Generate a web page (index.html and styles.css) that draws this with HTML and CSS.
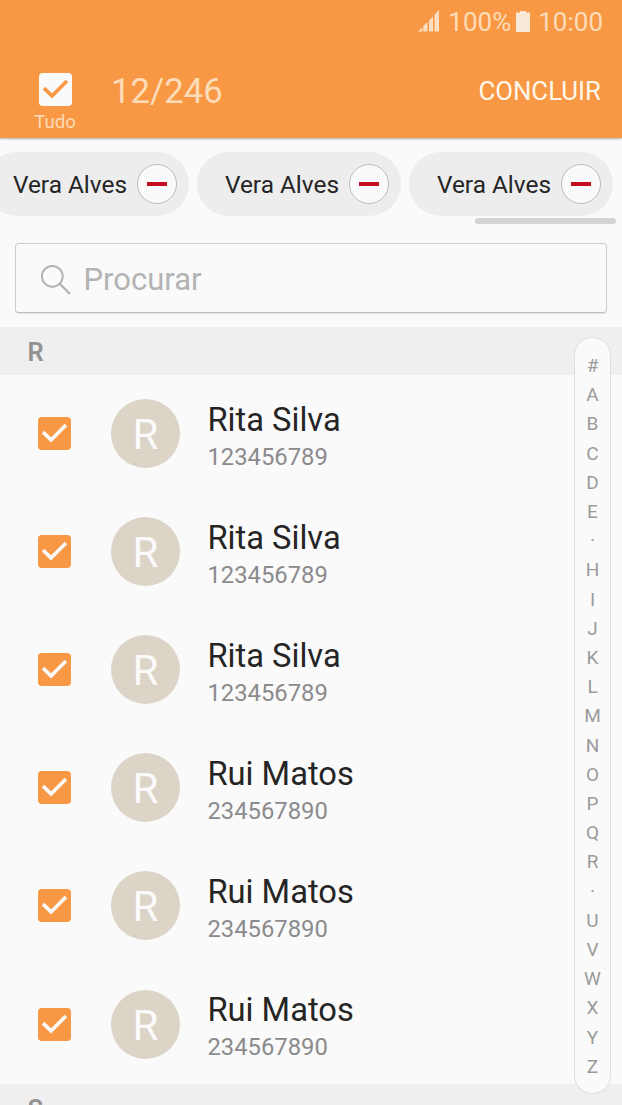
FILE: index.html
```html
<!DOCTYPE html>
<html lang="pt">
<head>
<meta charset="utf-8">
<title>Contactos</title>
<link rel="stylesheet" href="styles.css">
</head>

<body>

<svg class="symbols">
	<symbol id="check" viewBox="0 0 34 34">
		<path d="M5.2 15.6 L13.4 23.6 L28.8 8.2" fill="none" stroke="currentColor" stroke-width="3.7"/>
	</symbol>
</svg>

<div class="screen">

<header class="topBar">
	<div class="statusBar">
		<svg class="signalIcon" viewBox="0 0 22 22">
			<path d="M0 21.5 L4.3 17.5 V21.5 Z M5.3 21.5 V16 L9.5 12 V21.5 Z M11 21.5 V10.5 L15 6.5 V21.5 Z M16.5 21.5 V4.5 L21 0 V21.5 Z" fill="#fbdfc2"/>
		</svg>
		<span class="batteryText">100%</span>
		<svg class="batteryIcon" viewBox="0 0 14 21">
			<path d="M4 0 H10 V1.5 H14 V21 H0 V1.5 H4 Z" fill="#fae8d9"/>
		</svg>
		<span class="clock">10:00</span>
	</div>
	<div class="actionBar">
		<div class="selectAll">
			<span class="checkbox inverted"><svg><use href="#check"/></svg></span>
			<span class="selectAllLabel">Tudo</span>
		</div>
		<span class="counter">12/246</span>
		<span class="doneButton">CONCLUIR</span>
	</div>
</header>

<div class="chips">
	<div class="chip"><span class="chipName">Vera Alves</span><span class="chipRemove"></span></div>
	<div class="chip"><span class="chipName">Vera Alves</span><span class="chipRemove"></span></div>
	<div class="chip"><span class="chipName">Vera Alves</span><span class="chipRemove"></span></div>
</div>
<div class="scrollBar"></div>

<div class="searchBox">
	<svg class="searchIcon" viewBox="0 0 32 32">
		<circle cx="12.3" cy="12.3" r="10.4" fill="none" stroke="#b3b3b3" stroke-width="2"/>
		<path d="M19.6 19.6 L30 30" stroke="#b3b3b3" stroke-width="2.2"/>
	</svg>
	<span class="searchText">Procurar</span>
</div>

<main class="contacts">
	<div class="sectionHeader">R</div>

	<div class="contact">
		<span class="checkbox"><svg><use href="#check"/></svg></span>
		<span class="avatar">R</span>
		<div class="details"><div class="name">Rita Silva</div><div class="phone">123456789</div></div>
	</div>
	<div class="contact">
		<span class="checkbox"><svg><use href="#check"/></svg></span>
		<span class="avatar">R</span>
		<div class="details"><div class="name">Rita Silva</div><div class="phone">123456789</div></div>
	</div>
	<div class="contact">
		<span class="checkbox"><svg><use href="#check"/></svg></span>
		<span class="avatar">R</span>
		<div class="details"><div class="name">Rita Silva</div><div class="phone">123456789</div></div>
	</div>
	<div class="contact">
		<span class="checkbox"><svg><use href="#check"/></svg></span>
		<span class="avatar">R</span>
		<div class="details"><div class="name">Rui Matos</div><div class="phone">234567890</div></div>
	</div>
	<div class="contact">
		<span class="checkbox"><svg><use href="#check"/></svg></span>
		<span class="avatar">R</span>
		<div class="details"><div class="name">Rui Matos</div><div class="phone">234567890</div></div>
	</div>
	<div class="contact">
		<span class="checkbox"><svg><use href="#check"/></svg></span>
		<span class="avatar">R</span>
		<div class="details"><div class="name">Rui Matos</div><div class="phone">234567890</div></div>
	</div>

	<div class="sectionHeader">S</div>

	<!-- floats over the list -->
	<nav class="letterIndex">
		<span>#</span>
		<span>A</span>
		<span>B</span>
		<span>C</span>
		<span>D</span>
		<span>E</span>
		<span>·</span>
		<span>H</span>
		<span>I</span>
		<span>J</span>
		<span>K</span>
		<span>L</span>
		<span>M</span>
		<span>N</span>
		<span>O</span>
		<span>P</span>
		<span>Q</span>
		<span>R</span>
		<span>·</span>
		<span>U</span>
		<span>V</span>
		<span>W</span>
		<span>X</span>
		<span>Y</span>
		<span>Z</span>
	</nav>
</main>

</div>
</body>
</html>
```

FILE: styles.css
```css
* {
	box-sizing: border-box;
}

body {
	margin: 0;
	font-family: Roboto, sans-serif;
	background: #fafafa;
	color: #252525;
}

.symbols {
	display: none;
}

.screen {
	width: 622px;
	height: 1105px;
	overflow: hidden;
}

/* top bar */

.topBar {
	height: 138px;
	background: #f89844;
	box-shadow: 0 1px 2px rgba(0, 0, 0, 0.3);
}

.statusBar {
	display: flex;
	justify-content: flex-end;
	align-items: center;
	height: 43px;
	padding-right: 19px;
	font-size: 26px;
	line-height: 43px;
	color: #fcdcb9;
}

.batteryText,
.clock {
	padding-top: 2px;
}

.signalIcon {
	width: 22px;
	height: 22px;
	margin: 0 8px 2px 0;
}

.batteryIcon {
	width: 14px;
	height: 21px;
	margin: 0 8px 1px 5px;
}

.actionBar {
	display: flex;
	height: 95px;
	padding: 0 21px 0 27px;
}

.selectAll {
	display: flex;
	flex-direction: column;
	align-items: center;
	width: 56px;
	padding-top: 30px;
}

.selectAllLabel {
	margin-top: 4px;
	font-size: 18.6px;
	line-height: 24px;
	color: #fcdcb9;
}

.counter {
	flex: 1;
	padding-left: 28px;
	font-size: 34.7px;
	line-height: 97px;
	color: #fcdcb9;
}

.doneButton {
	font-size: 25.8px;
	line-height: 96px;
	color: #fff6ea;
}

.checkbox {
	flex: none;
	width: 33px;
	height: 33px;
	border-radius: 4px;
	background: #f89844;
	color: #fafafa;
}

.checkbox svg {
	display: block;
	width: 33px;
	height: 33px;
}

.inverted {
	background: #fafafa;
	color: #f89844;
}

/* selected contacts */

.chips {
	display: flex;
	justify-content: flex-end;
	gap: 8px;
	padding: 14px 8.6px 0 0;
}

.chip {
	flex: none;
	display: flex;
	justify-content: space-between;
	align-items: center;
	width: 204px;
	height: 64px;
	padding: 0 12px 0 27.5px;
	border-radius: 32px;
	background: #ededed;
}

.chipName {
	font-size: 24.4px;
	line-height: 66px;
	padding-top: 1px;
}

.chipRemove {
	display: flex;
	align-items: center;
	justify-content: center;
	width: 40px;
	height: 40px;
	border: 1px solid #bdbdbd;
	border-radius: 50%;
	background: #fafafa;
}

.chipRemove::before {
	content: "";
	width: 20px;
	height: 4px;
	background: #c40d1e;
}

.scrollBar {
	width: 141px;
	height: 6px;
	margin: 2px 6px 0 auto;
	border-radius: 3px;
	background: #d3d3d4;
}

/* search */

.searchBox {
	display: flex;
	align-items: center;
	height: 70px;
	margin: 19px 15px 14px;
	padding-left: 24px;
	border: 1px solid #cccccc;
	border-bottom-color: #bdbdbd;
	border-radius: 4px;
	box-shadow: 0 1px 1px rgba(0, 0, 0, 0.1);
}

.searchIcon {
	width: 32px;
	height: 32px;
	margin-top: 3px;
}

.searchText {
	margin-left: 11.5px;
	padding-top: 3px;
	font-size: 31px;
	line-height: 68px;
	color: #b3b3b3;
}

/* contact list */

.contacts {
	position: relative;
}

.sectionHeader {
	height: 48px;
	padding-left: 27.5px;
	font-size: 25.5px;
	font-weight: 600;
	line-height: 50px;
	color: #929292;
	background: #efefef;
}

.contact {
	display: flex;
	align-items: center;
	height: 118.1px;
	padding: 0 0 1px 38.4px;
}

.avatar {
	width: 69px;
	height: 69px;
	margin: 0 27.5px 0 39.5px;
	border-radius: 50%;
	font-size: 42px;
	line-height: 71px;
	text-align: center;
	color: #fafafa;
	background: #dbd4c7;
}

.details {
	padding-top: 5px;
}

.name {
	font-size: 32.7px;
	line-height: 42px;
}

.phone {
	font-size: 23.8px;
	line-height: 33px;
	color: #8b8b8d;
}

.letterIndex {
	position: absolute;
	top: 10px;
	right: 11px;
	display: flex;
	flex-direction: column;
	align-items: center;
	width: 37px;
	height: 757px;
	padding-top: 13px;
	border: 1px solid #dfdfdf;
	border-radius: 19px;
	background: #fafafa;
	font-size: 19px;
	line-height: 29.2px;
	color: #9b9b9b;
}
```
